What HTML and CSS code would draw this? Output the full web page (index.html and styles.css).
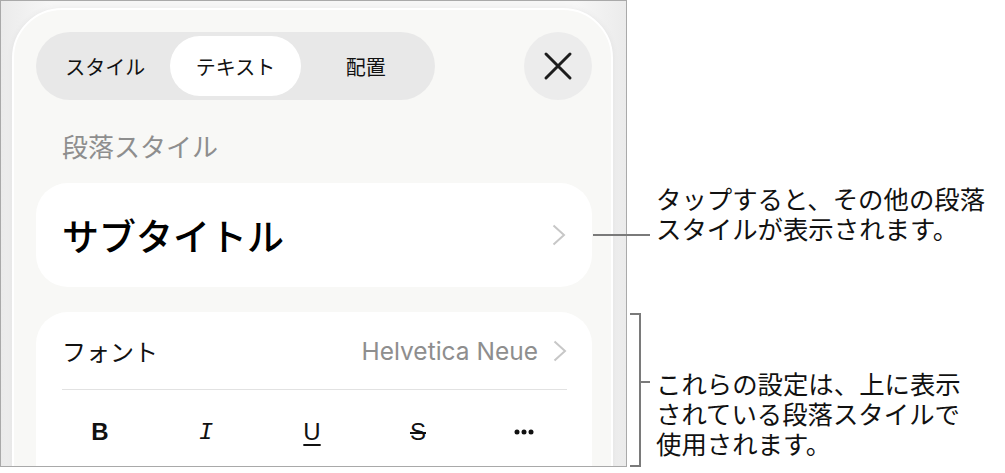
FILE: index.html
```html
<!DOCTYPE html>
<html>

<head>
    <meta charset="utf-8">
    <title>テキスト設定</title>
    <link rel="stylesheet" href="styles.css">
</head>

<body>
    <div class="page">
        <div class="shot">
            <div class="sheet">
                <div class="toolbar">
                    <div class="segmented">
                        <span class="seg">スタイル</span>
                        <span class="seg on">テキスト</span>
                        <span class="seg">配置</span>
                    </div>
                    <a href="javascript:;" class="close">
                        <svg width="30" height="30" viewBox="0 0 30 30">
                            <path d="M3 3 L27 27 M27 3 L3 27" stroke="#1d1d1d" stroke-width="3" stroke-linecap="round" fill="none" />
                        </svg>
                    </a>
                </div>
                <div class="section-title">段落スタイル</div>
                <div class="card style-card">
                    <span class="style-name">サブタイトル</span>
                    <svg class="chev" width="14" height="22" viewBox="0 0 14 22">
                        <path d="M1.5 1.5 L12 11 L1.5 20.5" stroke="#c7c7c7" stroke-width="2" fill="none" />
                    </svg>
                </div>
                <div class="card font-card">
                    <div class="font-row">
                        <span class="label">フォント</span>
                        <span class="value">Helvetica Neue
                            <svg class="chev" width="14" height="22" viewBox="0 0 14 22">
                                <path d="M1.5 1.5 L12 11 L1.5 20.5" stroke="#c7c7c7" stroke-width="2" fill="none" />
                            </svg>
                        </span>
                    </div>
                    <div class="format-row">
                        <span class="fmt bold">B</span>
                        <span class="fmt italic">I</span>
                        <span class="fmt under">U</span>
                        <span class="fmt strike">S</span>
                        <span class="fmt more">
                            <svg width="20" height="6" viewBox="0 0 20 6">
                                <circle cx="3" cy="3" r="2.5" fill="#111" />
                                <circle cx="10" cy="3" r="2.5" fill="#111" />
                                <circle cx="17" cy="3" r="2.5" fill="#111" />
                            </svg>
                        </span>
                    </div>
                </div>
            </div>
        </div>

        <div class="leader leader-top"></div>
        <div class="bracket"></div>
        <div class="leader leader-bottom"></div>

        <p class="note note-top">タップすると、その他の段落<br>スタイルが表示されます。</p>
        <p class="note note-bottom">これらの設定は、上に表示<br>されている段落スタイルで<br>使用されます。</p>
    </div>
</body>

</html>
```

FILE: styles.css
```css
* {
    margin: 0;
    padding: 0;
    box-sizing: border-box;
    text-decoration: none;
}

body {
    background: #fff;
    font-family: "Noto Sans CJK JP", "Liberation Sans", sans-serif;
    color: #111;
}

.page {
    width: 1005px;
    height: 473px;
    position: relative;
    overflow: hidden;
}

.shot {
    width: 627px;
    height: 467px;
    border: 1px solid #a9a9a9;
    background: linear-gradient(90deg, #ebebeb, #f6f6f6 8%, #f6f6f6 92%, #ebebeb);
    overflow: hidden;
}

.sheet {
    width: 601px;
    height: 480px;
    margin: 7px 0 0 11px;
    padding: 22px 19px 0 22px;
    background: #f8f8f6;
    border: 2px solid #fff;
    border-radius: 50px 50px 0 0;
    box-shadow: 0 0 6px rgba(0, 0, 0, 0.05);
}

.toolbar {
    display: flex;
    justify-content: space-between;
    align-items: center;
}

.segmented {
    width: 399px;
    height: 68px;
    padding: 4px;
    border-radius: 34px;
    background: #e8e8e8;
    display: flex;
}

.seg {
    flex: 1;
    display: flex;
    align-items: center;
    justify-content: center;
    border-radius: 31px;
    font-size: 20px;
    color: #111;
}

.seg.on {
    background: #fff;
}

.close {
    width: 68px;
    height: 68px;
    border-radius: 50%;
    background: #ececec;
    display: flex;
    align-items: center;
    justify-content: center;
}

.section-title {
    margin: 29px 0 21px 26px;
    font-size: 26px;
    line-height: 33px;
    color: #8e8e8e;
}

.card {
    background: #fff;
    border-radius: 32px;
}

.style-card {
    height: 104px;
    padding: 0 26px 0 26px;
    display: flex;
    align-items: center;
    justify-content: space-between;
}

.style-name {
    font-size: 37px;
    font-weight: 500;
    color: #000;
}

.font-card {
    margin-top: 25px;
    padding: 0 25px 0 26px;
    height: 200px;
}

.font-row {
    height: 78px;
    display: flex;
    align-items: center;
    justify-content: space-between;
    border-bottom: 1.5px solid #e2e2e2;
}

.font-row .label {
    font-size: 24px;
}

.font-row .value {
    display: flex;
    align-items: center;
    gap: 15px;
    font-family: "Inter", "Liberation Sans", sans-serif;
    font-size: 24.5px;
    color: #8e8e8e;
}

.format-row {
    height: 84px;
    padding: 0 28px 0 23px;
    display: flex;
    align-items: center;
    justify-content: space-between;
}

.fmt {
    width: 30px;
    text-align: center;
    font-family: "Liberation Sans", sans-serif;
    font-size: 24px;
    color: #111;
}

.fmt.bold {
    font-weight: bold;
}

.fmt.italic {
    font-family: "Liberation Mono", monospace;
    font-style: italic;
}

.fmt.under {
    text-decoration: underline;
    text-underline-offset: 4px;
    text-decoration-thickness: 1.5px;
}

.fmt.strike {
    text-decoration: line-through;
    text-decoration-thickness: 1.5px;
}

.fmt.more {
    display: flex;
    justify-content: center;
}

.leader {
    position: absolute;
    height: 2px;
    background: #7a7a7a;
}

.leader-top {
    left: 593px;
    top: 234px;
    width: 57px;
}

.bracket {
    position: absolute;
    left: 630px;
    top: 313px;
    width: 11px;
    height: 154px;
    border: 2px solid #7a7a7a;
    border-left: none;
}

.leader-bottom {
    left: 641px;
    top: 381px;
    width: 9px;
}

.note {
    position: absolute;
    left: 656px;
    font-size: 25.4px;
    line-height: 30px;
    color: #111;
}

.note-top {
    top: 183px;
}

.note-bottom {
    top: 368px;
}
```
